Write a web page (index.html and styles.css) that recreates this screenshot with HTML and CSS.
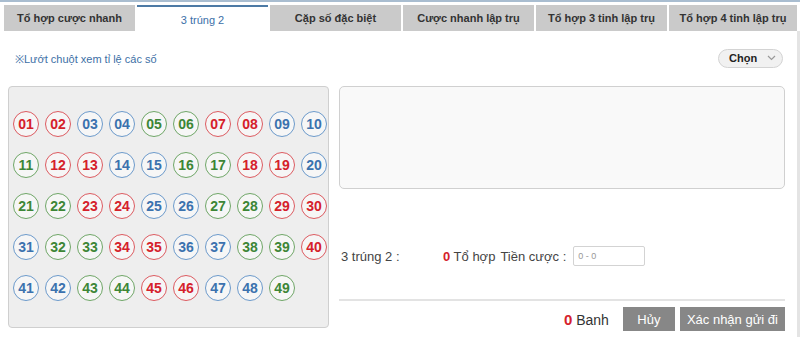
FILE: index.html
```html
<!DOCTYPE html>
<html lang="vi">
<head>
<meta charset="utf-8">
<link rel="stylesheet" href="styles.css">
</head>
<body>
<div class="topline"></div>
<div class="tabs">
  <div class="tab">Tổ hợp cược nhanh</div>
  <div class="tab active">3 trúng 2</div>
  <div class="tab">Cặp số đặc biệt</div>
  <div class="tab">Cược nhanh lập trụ</div>
  <div class="tab">Tổ hợp 3 tinh lập trụ</div>
  <div class="tab last">Tổ hợp 4 tinh lập trụ</div>
</div>
<div class="content">
  <div class="tiprow">
    <span class="tip">※Lướt chuột xem tỉ lệ các số</span>
    <div class="select"><span>Chọn</span>
      <svg width="9" height="6" viewBox="0 0 9 6"><path d="M1 1 L4.5 4.5 L8 1" fill="none" stroke="#999" stroke-width="1.2"/></svg>
    </div>
  </div>
  <div class="main">
    <div class="panel">
      <div class="balls">
        <span class="ball r">01</span><span class="ball r">02</span><span class="ball b">03</span><span class="ball b">04</span><span class="ball g">05</span><span class="ball g">06</span><span class="ball r">07</span><span class="ball r">08</span><span class="ball b">09</span><span class="ball b">10</span>
        <span class="ball g">11</span><span class="ball r">12</span><span class="ball r">13</span><span class="ball b">14</span><span class="ball b">15</span><span class="ball g">16</span><span class="ball g">17</span><span class="ball r">18</span><span class="ball r">19</span><span class="ball b">20</span>
        <span class="ball g">21</span><span class="ball g">22</span><span class="ball r">23</span><span class="ball r">24</span><span class="ball b">25</span><span class="ball b">26</span><span class="ball g">27</span><span class="ball g">28</span><span class="ball r">29</span><span class="ball r">30</span>
        <span class="ball b">31</span><span class="ball g">32</span><span class="ball g">33</span><span class="ball r">34</span><span class="ball r">35</span><span class="ball b">36</span><span class="ball b">37</span><span class="ball g">38</span><span class="ball g">39</span><span class="ball r">40</span>
        <span class="ball b">41</span><span class="ball b">42</span><span class="ball g">43</span><span class="ball g">44</span><span class="ball r">45</span><span class="ball r">46</span><span class="ball b">47</span><span class="ball b">48</span><span class="ball g">49</span>
      </div>
    </div>
    <div class="side">
      <div class="area"></div>
      <div class="info">
        <span class="lbl">3 trúng 2 :</span>
        <span class="cnt"><b class="red">0</b> Tổ hợp</span>
        <span class="money">Tiền cược :</span>
        <span class="input">0 - 0</span>
      </div>
      <div class="footer">
        <span class="total"><b class="red">0</b> Banh</span>
        <span class="btn">Hủy</span>
        <span class="btn">Xác nhận gửi đi</span>
      </div>
    </div>
  </div>
</div>
</body>
</html>
```

FILE: styles.css
```css
* { box-sizing: border-box; }
html, body { margin: 0; padding: 0; background: #fff; }
body { font-family: "Liberation Sans", Arial, sans-serif; color: #333; width: 800px; height: 337px; overflow: hidden; }

.topline { height: 2px; background: #a9bdd0; }

.tabs { display: flex; gap: 2px; padding: 3px 3px 0 4px; }
.tab {
  width: 131px; height: 26px;
  background: #cacaca;
  font-size: 11px; font-weight: bold; color: #333;
  display: flex; align-items: center; justify-content: center;
}
.tab.last { width: 128px; }
.tab.active {
  background: #fff; border-top: 2px solid #4d7aa5;
  font-weight: normal; color: #3c70a8; padding-top: 2px;
}

.content { border-right: 3px solid #e4e4e4; height: 306px; }

.tiprow {
  display: flex; justify-content: space-between; align-items: center;
  padding: 17px 14px 0 15px; height: 37px;
}
.tip { font-size: 11px; color: #3d6fa6; }
.select {
  width: 65px; height: 19px; border: 1px solid #d3d3d3; border-radius: 10px;
  background: #f1f1f1; display: flex; align-items: center; justify-content: space-between;
  padding: 0 6px 0 10px; font-size: 11px; font-weight: bold; color: #222;
}

.main { display: flex; padding: 18px 0 0 8px; gap: 10px; }

.panel {
  width: 321px; height: 242px; background: #eeeeee; border: 1px solid #cfcfcf; border-radius: 4px;
  padding: 24px 0 0 4px;
}
.balls { display: grid; grid-template-columns: repeat(10, 26px); column-gap: 6px; row-gap: 15px; }
.ball {
  width: 26px; height: 26px; border-radius: 50%; border: 1px solid;
  background: #f6f6f6;
  display: flex; align-items: center; justify-content: center;
  font-size: 14px; font-weight: bold;
}
.ball.r { color: #d5212b; border-color: #dc5a60; }
.ball.b { color: #3b72ae; border-color: #6c9acb; }
.ball.g { color: #3d8636; border-color: #6fa667; }

.side { width: 446px; display: flex; flex-direction: column; }
.area { height: 103px; background: #f9f9f9; border: 1px solid #d0d0d0; border-radius: 5px; }
.info { display: flex; align-items: center; height: 20px; margin-top: 57px; font-size: 13px; color: #444; padding-left: 2px; }
.lbl { width: 102px; }
.cnt b { font-size: 13px; }
.money { margin-left: 5px; margin-right: 7px; }
.input {
  width: 72px; height: 20px; border: 1px solid #d3d3d3; border-radius: 2px; background: #fff;
  font-size: 9px; color: #999; padding-left: 4px; display: flex; align-items: center;
}
.red { color: #d5212b; }
.footer {
  margin-top: 33px; border-top: 2px solid #e3e3e3;
  display: flex; justify-content: flex-end; align-items: center; gap: 5px;
  padding-top: 6px;
}
.total { font-size: 14px; color: #333; margin-right: 9px; }
.total b { font-size: 15px; }
.btn {
  background: #878787; color: #fff; font-size: 13px; height: 24px; padding: 0 7px;
  display: flex; align-items: center;
}
.btn:nth-of-type(2) { width: 52px; justify-content: center; }
```
